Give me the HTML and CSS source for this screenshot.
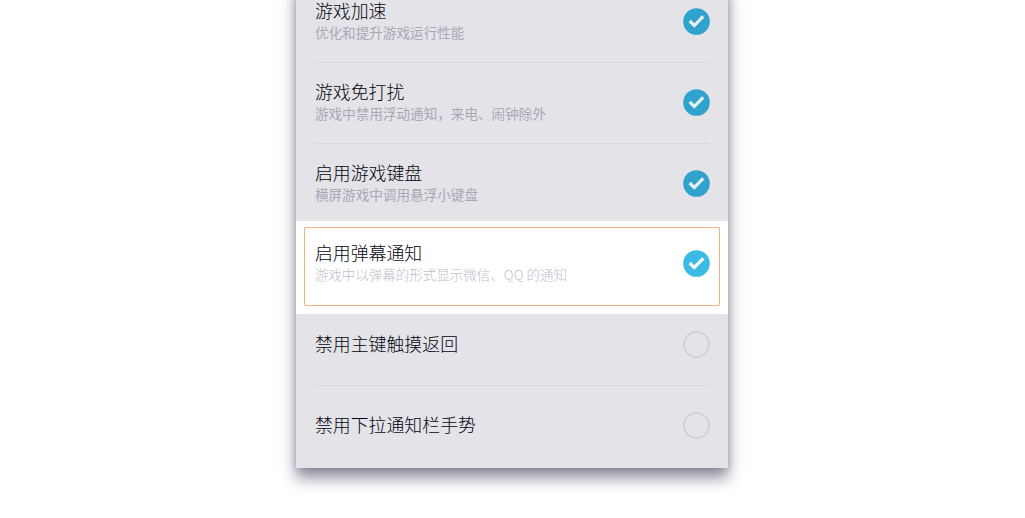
FILE: index.html
```html
<!DOCTYPE html>
<html lang="zh-CN">
<head>
    <meta charset="UTF-8">
    <meta name="viewport" content="width=device-width, initial-scale=1.0">
    <title>游戏设置</title>
    <link rel="stylesheet" href="styles.css">
</head>
<body>
    <svg class="sprite" width="0" height="0">
        <symbol id="check" viewBox="0 0 27 27">
            <circle cx="13.5" cy="13.5" r="13.3" fill="currentColor"/>
            <path d="M6.7 13l4.6 4.5 8.9-9.2" fill="none" stroke="var(--tick)" stroke-width="3.2"/>
        </symbol>
    </svg>

    <div class="panel">
        <div class="row">
            <div class="text">
                <div class="title">游戏加速</div>
                <div class="desc">优化和提升游戏运行性能</div>
            </div>
            <svg class="check"><use href="#check"/></svg>
        </div>
        <div class="row">
            <div class="text">
                <div class="title">游戏免打扰</div>
                <div class="desc">游戏中禁用浮动通知，来电、闹钟除外</div>
            </div>
            <svg class="check"><use href="#check"/></svg>
        </div>
        <div class="row before-highlight">
            <div class="text">
                <div class="title">启用游戏键盘</div>
                <div class="desc">横屏游戏中调用悬浮小键盘</div>
            </div>
            <svg class="check"><use href="#check"/></svg>
        </div>
        <div class="highlight">
            <div class="highlight-box">
                <div class="text">
                    <div class="title">启用弹幕通知</div>
                    <div class="desc">游戏中以弹幕的形式显示微信、QQ 的通知</div>
                </div>
                <svg class="check"><use href="#check"/></svg>
            </div>
        </div>
        <div class="row after-highlight">
            <div class="title">禁用主键触摸返回</div>
            <div class="radio"></div>
        </div>
        <div class="row last">
            <div class="title">禁用下拉通知栏手势</div>
            <div class="radio"></div>
        </div>
    </div>
</body>
</html>
```

FILE: styles.css
```css
:root {
    --panel-bg: #e3e3e8;
    --line: #d7d7dc;
    --title: #04040f;
    --desc: #a9a9b3;
    --blue: #2fa3cd;
    --tick: #e8f1f5;
    --orange: #efb38a;
}

* {
    margin: 0;
    padding: 0;
    box-sizing: border-box;
}

body {
    height: 518px;
    background: #fff;
    font-family: "Noto Sans CJK SC", sans-serif;
    overflow: hidden;
}

.sprite {
    display: block;
}

.panel {
    width: 432px;
    height: 486.4px;
    margin: -18px 0 0 296.4px;
    background: var(--panel-bg);
    box-shadow: 0 10px 14px rgba(50, 50, 80, 0.55), 0 0 7px rgba(50, 50, 80, 0.2);
}

.row {
    display: flex;
    align-items: center;
    justify-content: space-between;
    height: 81px;
    margin: 0 18.5px;
    padding: 17px 0 19px;
    border-bottom: 1px solid var(--line);
}

.before-highlight {
    height: 77px;
    padding-bottom: 16px;
    border-bottom: none;
}

.after-highlight {
    height: 72px;
    padding-top: 8px;
}

.last {
    border-bottom: none;
    padding-bottom: 20px;
}

.text,
.row > .title {
    padding-bottom: 3px;
}

.title {
    font-size: 17.9px;
    font-weight: 300;
    line-height: 24px;
    color: var(--title);
}

.desc {
    font-size: 13.6px;
    line-height: 20px;
    color: var(--desc);
    white-space: nowrap;
}

.check {
    flex: none;
    width: 27px;
    height: 27px;
    color: var(--blue);
}

.radio {
    flex: none;
    width: 27px;
    height: 27px;
    border: 2px solid #d1d1d6;
    border-radius: 50%;
}

.highlight {
    --blue: #3bbae6;
    --tick: #fff;
    --desc: #bebeca;
    height: 93px;
    padding: 6px 8.4px 8px 7.4px;
    background: #fff;
}

.highlight-box {
    display: flex;
    align-items: center;
    justify-content: space-between;
    height: 79px;
    padding: 0 9.1px 6px 10.1px;
    border: 1px solid var(--orange);
    border-radius: 1px;
}

.highlight .desc {
    font-size: 13.5px;
    font-weight: 300;
}
```
